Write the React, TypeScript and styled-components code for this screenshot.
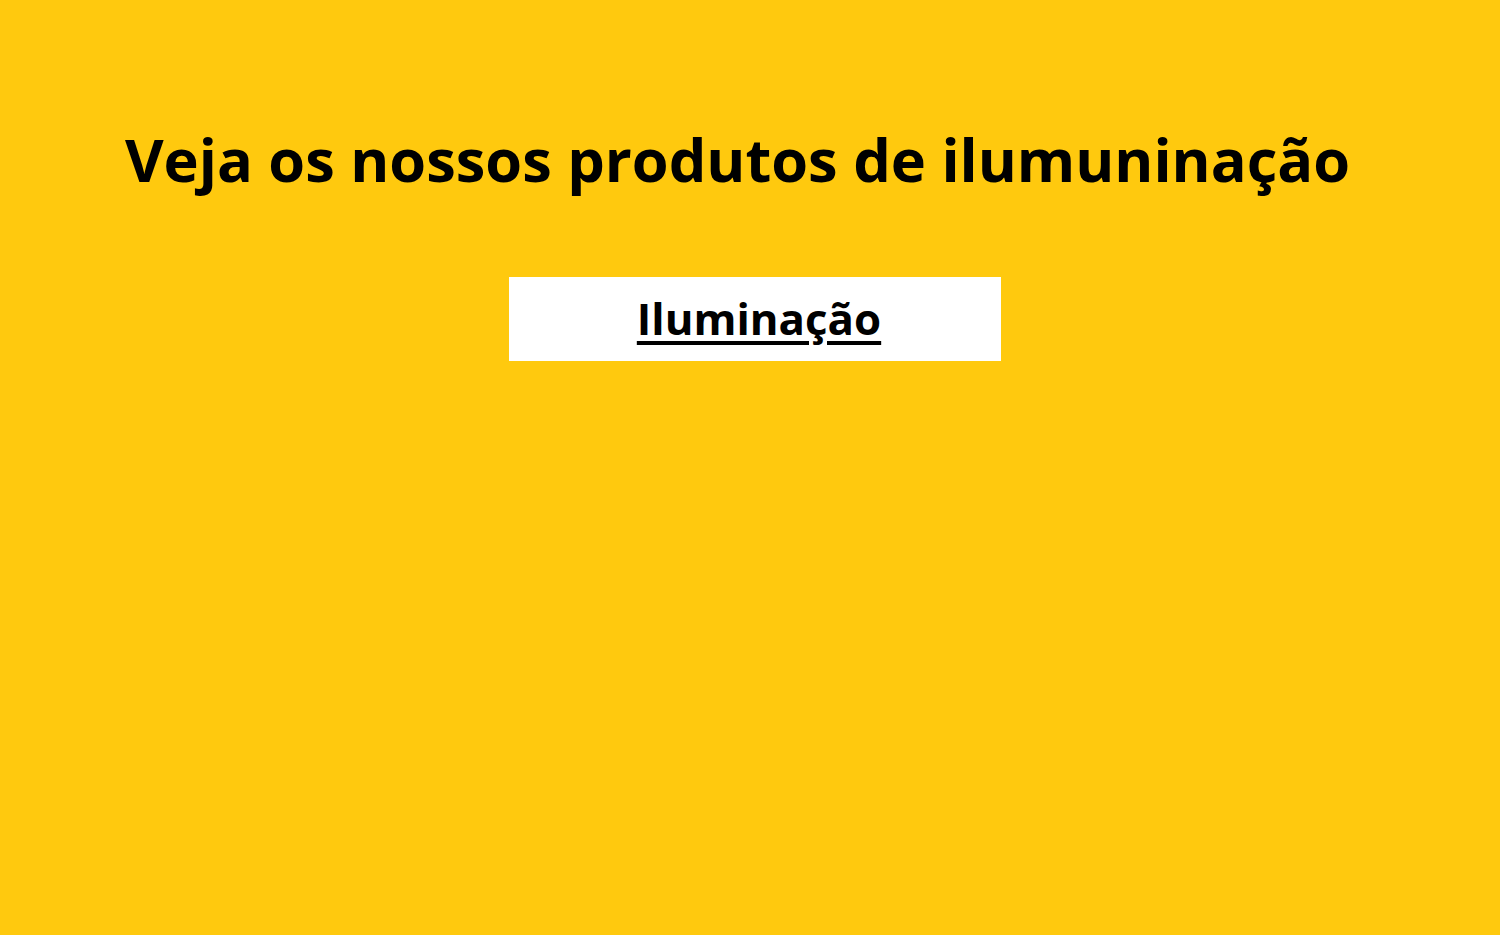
import React from "react";
import styled, { createGlobalStyle } from "styled-components";

const Global = createGlobalStyle`
  html, body { margin: 0; padding: 0; background: #ffc90e; }
  body { font-family: "Open Sans", "DejaVu Sans", sans-serif; }
`;

const Page = styled.main`
  min-height: 935px;
  display: flex;
  flex-direction: column;
  align-items: center;
  padding-top: 129px;
  box-sizing: border-box;
`;

const Title = styled.h1`
  margin: 0 25px 0 0;
  height: 60px;
  font-size: 59.5px;
  font-weight: 700;
  line-height: 60px;
  color: #000;
  text-align: center;
`;

const Card = styled.div`
  margin: 88px 0 0 10px;
  width: 492px;
  height: 84px;
  box-sizing: border-box;
  padding-left: 8px;
  background: #fff;
  display: flex;
  align-items: center;
  justify-content: center;
`;

const Link = styled.a`
  font-size: 43.8px;
  font-weight: 700;
  line-height: 1;
  color: #000;
  text-decoration: underline;
  text-decoration-thickness: 4px;
  text-underline-offset: 6px;
`;

export default function App() {
  return (
    <>
      <Global />
      <Page>
        <Title>Veja os nossos produtos de ilumuninação</Title>
        <Card>
          <Link href="#">Iluminação</Link>
        </Card>
      </Page>
    </>
  );
}
